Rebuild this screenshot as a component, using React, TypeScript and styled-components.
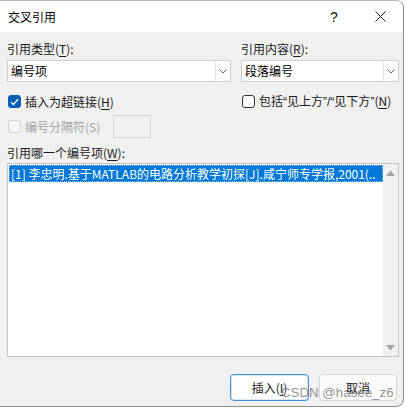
import React from "react";
import styled, { createGlobalStyle } from "styled-components";

const Global = createGlobalStyle`
  html, body { margin: 0; padding: 0; background: #ffffff; }
  body { font-family: "Noto Sans CJK SC", "Noto Sans", sans-serif; font-size: 12px; color: #1a1a1a; }
`;

const Dialog = styled.div`
  position: relative;
  width: 403px;
  height: 405px;
  background: #f0f0f0;
  border-top: 1px solid #b8b8b8;
  border-right: 1px solid #8f8f8f;
  border-bottom: 1px solid #8f8f8f;
  border-radius: 0 8px 8px 0;
  overflow: hidden;
  display: flex;
  flex-direction: column;
`;

const TitleBar = styled.div`
  height: 31px;
  background: #ffffff;
  display: flex;
  align-items: center;
  justify-content: space-between;
  padding-left: 8px;
`;

const Title = styled.div`
  font-size: 12px;
  line-height: 16px;
  color: #000;
`;

const TitleButtons = styled.div`
  display: flex;
  align-items: center;
  height: 100%;
`;

const TitleButton = styled.div`
  width: 46px;
  height: 100%;
  display: flex;
  align-items: center;
  justify-content: center;
  font-family: "Liberation Sans", sans-serif;
  font-size: 14px;
  color: #111;
`;

const Body = styled.div`
  flex: 1;
  display: flex;
  flex-direction: column;
  padding: 9px 4px 0 7px;
`;

const TwoCols = styled.div<{ $mt?: number }>`
  display: grid;
  grid-template-columns: 224px 158px;
  column-gap: 10px;
  margin-top: ${(p) => p.$mt ?? 0}px;
`;

const Label = styled.div`
  line-height: 16px;
  height: 16px;
  white-space: nowrap;
  color: #1a1a1a;
`;

const U = styled.span`
  text-decoration: underline;
  text-underline-offset: 2px;
`;

const Q = styled.span`
  font-family: "Liberation Sans", Arial, sans-serif;
`;

const Combo = styled.div`
  margin-top: 3px;
  height: 22px;
  box-sizing: border-box;
  background: #fff;
  border: 1px solid #cdcdcd;
  display: flex;
  align-items: stretch;
`;

const ComboText = styled.div`
  flex: 1;
  padding-left: 3px;
  line-height: 20px;
  color: #000;
`;

const ComboArrow = styled.div`
  width: 14px;
  border-left: 1px solid #e3e3e3;
  display: flex;
  align-items: center;
  justify-content: center;
`;

const CheckItem = styled.label<{ $disabled?: boolean }>`
  display: flex;
  align-items: center;
  gap: 4px;
  margin-left: 1px;
  white-space: nowrap;
  line-height: 16px;
  color: ${(p) => (p.$disabled ? "#a3a3a3" : "#1a1a1a")};
`;

const Box = styled.span<{ $checked?: boolean; $disabled?: boolean }>`
  width: 13px;
  height: 13px;
  box-sizing: border-box;
  border-radius: 3px;
  flex-shrink: 0;
  display: inline-flex;
  align-items: center;
  justify-content: center;
  background: ${(p) => (p.$checked ? "#005fb8" : p.$disabled ? "#f5f5f5" : "#ffffff")};
  border: 1px solid
    ${(p) => (p.$checked ? "#005fb8" : p.$disabled ? "#d0d0d0" : "#333333")};
`;

const SepRow = styled.div`
  margin-top: 5px;
  height: 23px;
  display: flex;
  align-items: center;
`;

const SepInput = styled.div`
  margin-left: 13px;
  width: 38px;
  height: 23px;
  box-sizing: border-box;
  border: 1px solid #d4d4d4;
  background: #f0f0f0;
`;

const ListLabel = styled(Label)`
  margin-top: 7px;
`;

const ListBox = styled.div`
  margin-top: 2px;
  height: 194px;
  width: 392px;
  box-sizing: border-box;
  border: 1px solid #c4c4c4;
  background: #ffffff;
  display: flex;
`;

const ListItems = styled.div`
  flex: 1;
  padding: 1px 0 0 1px;
  min-width: 0;
`;

const ListItem = styled.div<{ $selected?: boolean }>`
  height: 17px;
  line-height: 17px;
  padding-left: 2px;
  white-space: nowrap;
  overflow: hidden;
  background: ${(p) => (p.$selected ? "#0078d7" : "transparent")};
  color: ${(p) => (p.$selected ? "#ffffff" : "#000")};
  outline: ${(p) => (p.$selected ? "1px dotted #8fc1ee" : "none")};
  outline-offset: -1px;
`;

const ScrollBar = styled.div`
  width: 15px;
  background: #f0f0f0;
  display: flex;
  flex-direction: column;
  justify-content: space-between;
  align-items: center;
  padding: 6px 0 5px;
`;

const ButtonRow = styled.div`
  margin-top: 17px;
  margin-right: 2px;
  display: flex;
  justify-content: flex-end;
  gap: 10px;
`;

const Button = styled.div<{ $primary?: boolean }>`
  width: ${(p) => (p.$primary ? 79 : 78)}px;
  height: 27px;
  box-sizing: border-box;
  border-radius: 4px;
  display: flex;
  align-items: center;
  justify-content: center;
  background: ${(p) => (p.$primary ? "#ffffff" : "#fbfbfb")};
  border: ${(p) => (p.$primary ? "1px solid #3d8fd9" : "1px solid #d3d3d3")};
  box-shadow: ${(p) => (p.$primary ? "inset 0 0 0 1px #d9e9f8" : "none")};
  color: #1a1a1a;
`;

const Watermark = styled.div`
  position: absolute;
  left: 281px;
  top: 384px;
  font-family: "Liberation Sans", Arial, sans-serif;
  font-size: 13.3px;
  line-height: 16px;
  color: rgba(110, 110, 110, 0.75);
  pointer-events: none;
  white-space: nowrap;
`;

const Chevron = () => (
  <svg width="8" height="5" viewBox="0 0 8 5">
    <polyline points="0.5,0.5 4,4 7.5,0.5" fill="none" stroke="#6a6a6a" strokeWidth="1" />
  </svg>
);

const Tick = () => (
  <svg width="9" height="8" viewBox="0 0 9 8">
    <polyline points="1,4.2 3.4,6.5 8,1.2" fill="none" stroke="#ffffff" strokeWidth="1.3" />
  </svg>
);

const Triangle = ({ up }: { up?: boolean }) => (
  <svg width="9" height="6" viewBox="0 0 9 6">
    <polygon points={up ? "0,6 4.5,0.5 9,6" : "0,0 4.5,5.5 9,0"} fill="#a3a3a3" />
  </svg>
);

export default function App() {
  return (
    <>
      <Global />
      <Dialog>
        <TitleBar>
          <Title>交叉引用</Title>
          <TitleButtons>
            <TitleButton>?</TitleButton>
            <TitleButton>
              <svg width="11" height="11" viewBox="0 0 11 11">
                <path d="M0.5 0.5 L10.5 10.5 M10.5 0.5 L0.5 10.5" stroke="#1a1a1a" strokeWidth="1" />
              </svg>
            </TitleButton>
          </TitleButtons>
        </TitleBar>
        <Body>
          <TwoCols>
            <div>
              <Label>
                引用类型(<U>T</U>):
              </Label>
              <Combo>
                <ComboText>编号项</ComboText>
                <ComboArrow>
                  <Chevron />
                </ComboArrow>
              </Combo>
            </div>
            <div>
              <Label>
                引用内容(<U>R</U>):
              </Label>
              <Combo>
                <ComboText>段落编号</ComboText>
                <ComboArrow>
                  <Chevron />
                </ComboArrow>
              </Combo>
            </div>
          </TwoCols>
          <TwoCols $mt={11}>
            <CheckItem>
              <Box $checked>
                <Tick />
              </Box>
              <span>
                插入为超链接(<U>H</U>)
              </span>
            </CheckItem>
            <CheckItem>
              <Box />
              <span>
                包括<Q>“</Q>见上方<Q>”/“</Q>见下方<Q>”</Q>(<U>N</U>)
              </span>
            </CheckItem>
          </TwoCols>
          <SepRow>
            <CheckItem $disabled>
              <Box $disabled />
              <span>编号分隔符(S)</span>
            </CheckItem>
            <SepInput />
          </SepRow>
          <ListLabel>
            引用哪一个编号项(<U>W</U>):
          </ListLabel>
          <ListBox>
            <ListItems>
              <ListItem $selected>[1] 李忠明.基于MATLAB的电路分析教学初探[J].咸宁师专学报,2001(..</ListItem>
            </ListItems>
            <ScrollBar>
              <Triangle up />
              <Triangle />
            </ScrollBar>
          </ListBox>
          <ButtonRow>
            <Button $primary>
              <span>
                插入(<U>I</U>)
              </span>
            </Button>
            <Button>取消</Button>
          </ButtonRow>
        </Body>
        <Watermark>CSDN @hasee_z6</Watermark>
      </Dialog>
    </>
  );
}
